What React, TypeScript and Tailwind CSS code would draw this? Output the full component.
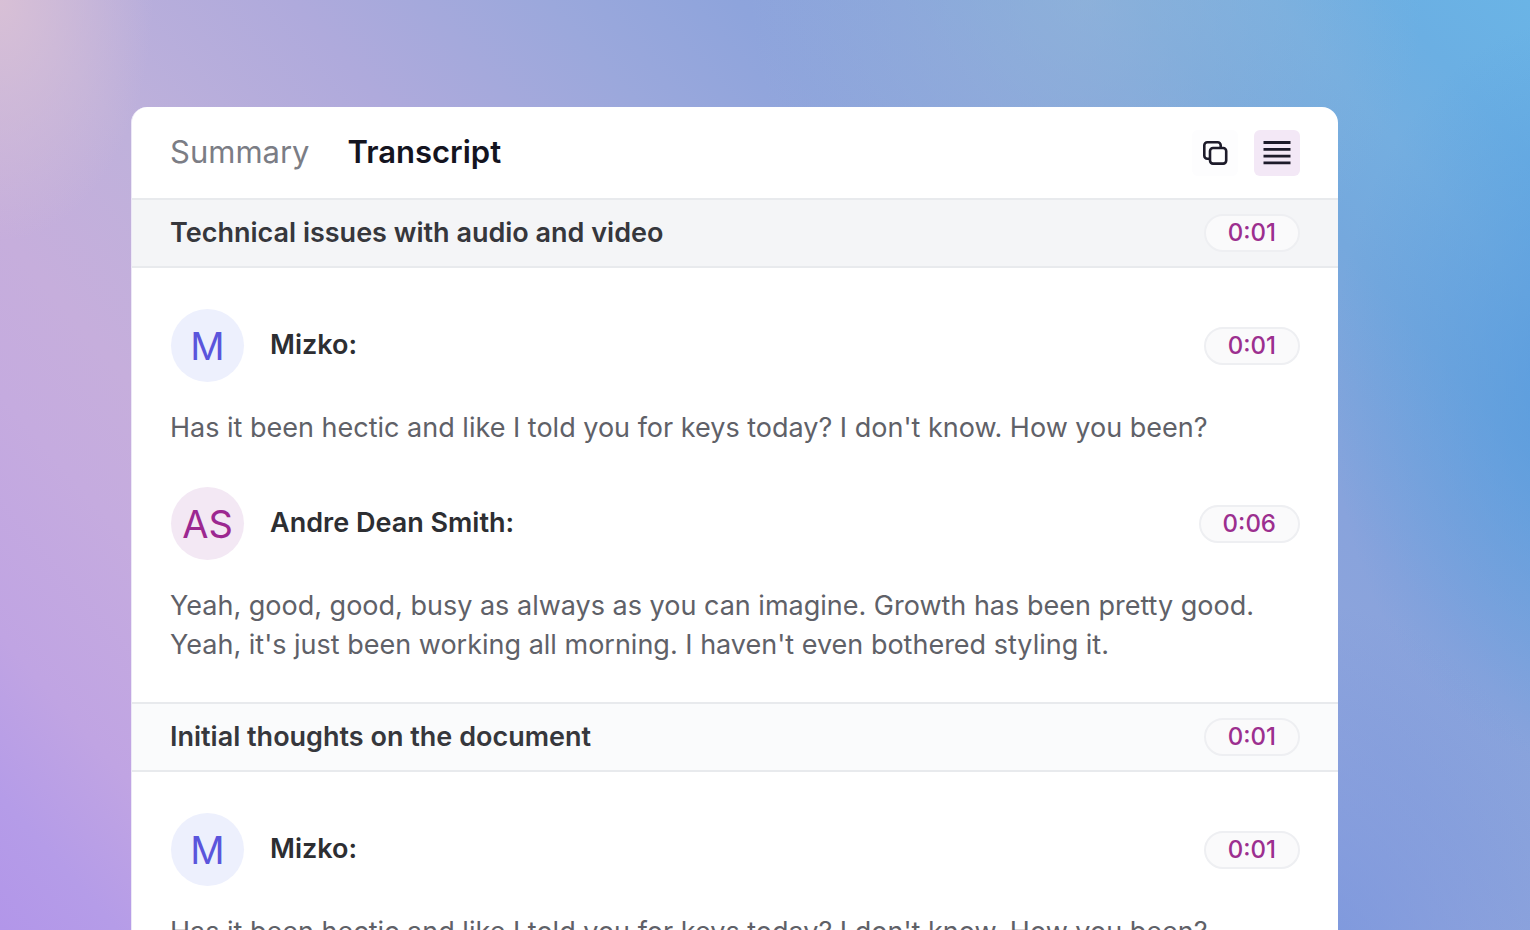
import React, { useState } from 'react';
import clsx from 'clsx';

type Tab = 'summary' | 'transcript';

interface Entry {
  speaker: string;
  initials: string;
  time: string;
  lines: string[];
  tone: 'indigo' | 'purple';
}

interface Section {
  title: string;
  time: string;
  active?: boolean;
  entries: Entry[];
}

const mizko: Entry = {
  speaker: 'Mizko',
  initials: 'M',
  time: '0:01',
  lines: ["Has it been hectic and like I told you for keys today? I don't know. How you been?"],
  tone: 'indigo',
};

const sections: Section[] = [
  {
    title: 'Technical issues with audio and video',
    time: '0:01',
    active: true,
    entries: [
      mizko,
      {
        speaker: 'Andre Dean Smith',
        initials: 'AS',
        time: '0:06',
        lines: [
          'Yeah, good, good, busy as always as you can imagine. Growth has been pretty good.',
          "Yeah, it's just been working all morning. I haven't even bothered styling it.",
        ],
        tone: 'purple',
      },
    ],
  },
  {
    title: 'Initial thoughts on the document',
    time: '0:01',
    entries: [mizko],
  },
];

const CopyIcon: React.FC = () => (
  <svg width="28" height="28" viewBox="0 0 28 28" fill="none" stroke="#1d1b2a" strokeWidth="2.6" strokeLinejoin="round" aria-hidden="true">
    <path d="M8.5 19.8H6.3a3 3 0 0 1-3-3V6.3a3 3 0 0 1 3-3h10.4a3 3 0 0 1 3 3v2.2" />
    <rect x="9" y="9" width="16.2" height="15.6" rx="3" />
  </svg>
);

const LinesIcon: React.FC = () => (
  <svg width="28" height="28" viewBox="0 0 28 28" stroke="#1d1b2a" strokeWidth="2.8" aria-hidden="true">
    <path d="M.5 3.5h27M.5 10.3h27M.5 17.1h27M.5 23.9h27" />
  </svg>
);

const TimeBadge: React.FC<{ time: string }> = ({ time }) => (
  <button className="h-[38px] shrink-0 rounded-full border-2 border-[#eeeff2] bg-[#fafafb] px-[22px] text-2xl leading-none font-medium text-[#9c2f8f]">
    {time}
  </button>
);

const TranscriptEntry: React.FC<{ entry: Entry }> = ({ entry }) => (
  <article>
    <div className="flex items-center justify-between">
      <div className="flex items-center gap-[26px] pl-px">
        <span
          className={clsx(
            'flex size-[73px] items-center justify-center rounded-full text-[38px] leading-none',
            entry.tone === 'indigo' ? 'bg-[#edf0fd] text-[#5b55dc]' : 'bg-[#f3e8f4] text-[#9c2790]'
          )}
        >
          {entry.initials}
        </span>
        <h3 className="text-[27px] font-semibold text-[#2d2e32]">{entry.speaker}:</h3>
      </div>
      <TimeBadge time={entry.time} />
    </div>
    <p className="mt-[26px] text-[27px] leading-[39px] text-[#5f6168]">
      {entry.lines.map((line) => (
        <span key={line} className="block">
          {line}
        </span>
      ))}
    </p>
  </article>
);

const App: React.FC = () => {
  const [tab, setTab] = useState<Tab>('transcript');

  const tabClass = (name: Tab) =>
    tab === name ? 'font-semibold text-[#14141f]' : 'font-normal text-[#7b7d85]';

  return (
    <main className="h-screen overflow-hidden bg-[radial-gradient(ellipse_10%_26%_at_0%_0%,#d8c0d6,transparent),radial-gradient(ellipse_18%_40%_at_86%_105%,#7393decc,transparent),radial-gradient(ellipse_22%_34%_at_71%_0%,#9cb8d890,transparent),radial-gradient(ellipse_16%_40%_at_103%_42%,#5298dec0,transparent),linear-gradient(49deg,#b296e9_0%,#b59ce8_5%,#c0a4e3_11%,#c5abdf_20%,#c6aedc_26%,#bfb1db_35%,#afaadc_47%,#9ba8dc_58%,#8ea4dc_66%,#88a3dc_73%,#7fa5dc_78%,#75a8dd_83%,#74aee0_89%,#6bafe3_94%,#6ab4e6_100%)] pt-[107px] pr-[192px] pl-[131px] font-['Inter',sans-serif]">
      <div className="h-full overflow-hidden rounded-t-2xl border-l border-[#ece8f6] bg-white">
        <header className="flex h-[91px] items-center justify-between px-[38px]">
          <nav className="flex gap-[38px] text-[31px]">
            <button className={tabClass('summary')} onClick={() => setTab('summary')}>
              Summary
            </button>
            <button className={tabClass('transcript')} onClick={() => setTab('transcript')}>
              Transcript
            </button>
          </nav>
          <div className="flex gap-4">
            <button aria-label="Copy transcript" className="flex size-[46px] items-center justify-center rounded-md bg-[#fdfdfe]">
              <CopyIcon />
            </button>
            <button aria-label="Toggle list view" className="flex size-[46px] items-center justify-center rounded-md bg-[#f3e8f6]">
              <LinesIcon />
            </button>
          </div>
        </header>

        {sections.map((section) => (
          <section key={section.title}>
            <div
              className={clsx(
                'flex h-[70px] items-center justify-between border-y-2 border-[#e8eaed] px-[38px]',
                section.active ? 'bg-[#f4f5f7]' : 'bg-[#fafbfc]'
              )}
            >
              <h2 className="text-[27px] font-semibold text-[#36373c]">{section.title}</h2>
              <TimeBadge time={section.time} />
            </div>
            <div className="flex flex-col gap-10 px-[38px] pt-[41px] pb-[38px]">
              {section.entries.map((entry) => (
                <TranscriptEntry key={entry.speaker} entry={entry} />
              ))}
            </div>
          </section>
        ))}
      </div>
    </main>
  );
};

export default App;
